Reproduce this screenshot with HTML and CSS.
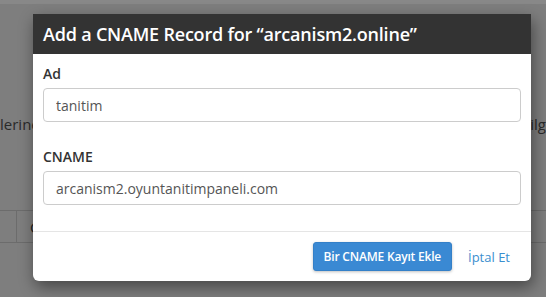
FILE: index.html
```html
<!DOCTYPE html>
<html lang="tr">
<head>
    <meta charset="UTF-8">
    <meta name="viewport" content="width=device-width, initial-scale=1.0">
    <title>CNAME Kaydı Ekle</title>
    <link rel="stylesheet" href="styles.css">
</head>
<body>
    <div class="page">
        <div class="topbar"></div>

        <div class="intro">
            <span>lerine yönlendirmek için kayıt ekleyin</span>
            <span>ilg</span>
        </div>

        <table class="records">
            <tr>
                <td class="check"></td>
                <td>CNAME</td>
            </tr>
        </table>
    </div>

    <div class="modal">
        <div class="modal-header">Add a CNAME Record for “arcanism2.online”</div>

        <div class="modal-body">
            <div class="form-group">
                <label for="name">Ad</label>
                <input type="text" id="name" value="tanitim">
            </div>

            <div class="form-group">
                <label for="cname">CNAME</label>
                <input type="text" id="cname" value="arcanism2.oyuntanitimpaneli.com">
            </div>
        </div>

        <div class="modal-footer">
            <button class="btn-primary">Bir CNAME Kayıt Ekle</button>
            <a href="#" class="cancel">İptal Et</a>
        </div>
    </div>
</body>
</html>
```

FILE: styles.css
```css
body {
    margin: 0;
    font-family: 'Open Sans', 'Liberation Sans', sans-serif;
    background: #7e7e7e;
    color: #2a2a2a;
    overflow: hidden;
}

.page {
    height: 297px;
}

.topbar {
    height: 4px;
    background: #888;
}

.intro {
    display: flex;
    justify-content: space-between;
    margin-top: 110px;
    font-size: 15px;
    line-height: 20px;
    white-space: nowrap;
    overflow: hidden;
}

.records {
    margin-top: 76px;
    width: 100%;
    border-collapse: collapse;
    font-size: 15px;
    color: #222;
}

.records td {
    height: 31px;
    border-top: 1px solid #6c6c6c;
    border-bottom: 1px solid #6c6c6c;
    padding: 0 0 0 13px;
}

.records .check {
    width: 3px;
    border-right: 1px solid #6c6c6c;
}

.modal {
    position: absolute;
    left: 33px;
    top: 14px;
    width: 498px;
    background: #fff;
    border-radius: 0 0 6px 6px;
    box-shadow: 2px 6px 16px rgba(0, 0, 0, 0.45);
}

.modal-header {
    height: 40px;
    line-height: 40px;
    padding: 0 10px;
    background: #333;
    color: #fff;
    font-size: 18px;
    font-weight: 600;
    letter-spacing: -0.2px;
}

.modal-body {
    padding: 10px 10px 26px;
    border-bottom: 1px solid #e5e5e5;
}

.form-group + .form-group {
    margin-top: 25px;
}

label {
    display: block;
    font-size: 14px;
    font-weight: 600;
    line-height: 20px;
    color: #333;
    margin-bottom: 4px;
}

input[type="text"] {
    box-sizing: border-box;
    width: 100%;
    height: 34px;
    padding: 0 12px;
    font-family: inherit;
    font-size: 14px;
    color: #555;
    border: 1px solid #ccc;
    border-radius: 4px;
}

.modal-footer {
    display: flex;
    justify-content: flex-end;
    align-items: center;
    padding: 10px 21px 10px 10px;
}

.btn-primary {
    height: 29px;
    padding: 0 10px;
    font-family: inherit;
    font-size: 12px;
    font-weight: 600;
    letter-spacing: -0.2px;
    color: #fff;
    background: #3a89d3;
    border: 1px solid #3480c8;
    border-radius: 3px;
    box-shadow: 0 1px 3px rgba(0, 0, 0, 0.25);
}

.cancel {
    margin-left: 16px;
    font-size: 13px;
    color: #3b8fcf;
    text-decoration: none;
}
```
